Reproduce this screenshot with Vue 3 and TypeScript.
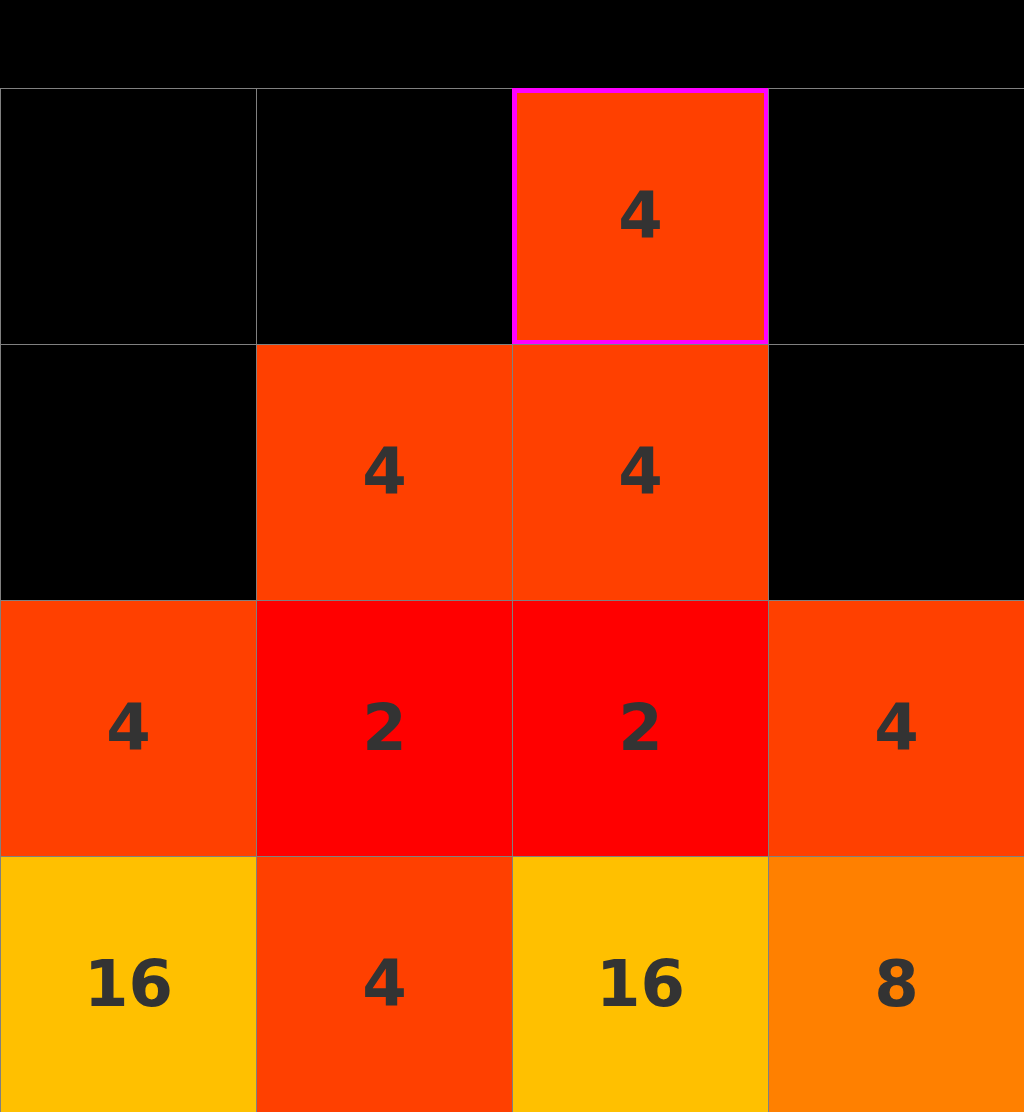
<script setup lang="ts">
interface Tile {
  value: number | null
  selected?: boolean
}

const rows: Tile[][] = [
  [{ value: null }, { value: null }, { value: 4, selected: true }, { value: null }],
  [{ value: null }, { value: 4 }, { value: 4 }, { value: null }],
  [{ value: 4 }, { value: 2 }, { value: 2 }, { value: 4 }],
  [{ value: 16 }, { value: 4 }, { value: 16 }, { value: 8 }],
]
</script>

<template>
  <main class="game">
    <div class="board">
      <template v-for="(row, r) in rows" :key="r">
        <div
          v-for="(tile, c) in row"
          :key="c"
          class="tile"
          :class="[tile.value ? `tile-${tile.value}` : 'empty', { selected: tile.selected }]"
        >
          {{ tile.value ?? '' }}
        </div>
      </template>
    </div>
  </main>
</template>

<style>
body {
  background: #000;
}
</style>

<style scoped>
.game {
  padding-top: 88px;
  background: #000;
}

.board {
  display: grid;
  grid-template-columns: repeat(4, minmax(0, 1fr));
}

.tile {
  box-sizing: border-box;
  aspect-ratio: 1;
  display: flex;
  align-items: center;
  justify-content: center;
  border-top: 1px solid #808080;
  border-left: 1px solid #808080;
  color: #333;
  font: bold 64px/75px "DejaVu Sans", sans-serif;
}

.tile-2 {
  background: #ff0000;
}

.tile-4 {
  background: #ff4000;
}

.tile-8 {
  background: #ff8000;
}

.tile-16 {
  background: #ffc000;
}

.selected {
  border: solid #ff00ff;
  border-width: 5px 4px 4px 5px;
}
</style>
